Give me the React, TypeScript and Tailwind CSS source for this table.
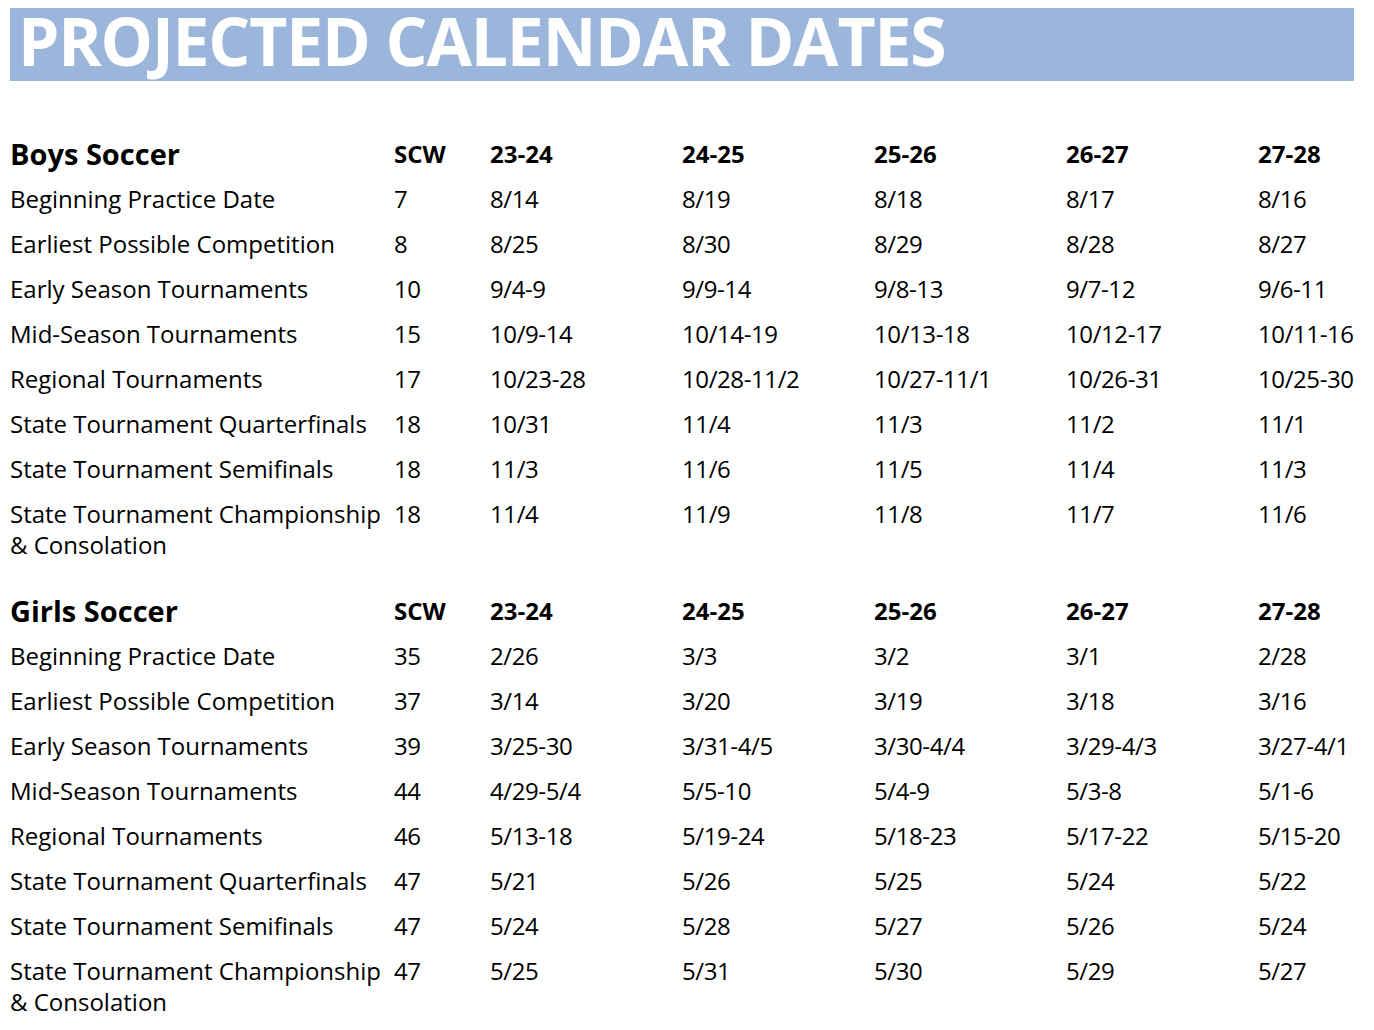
import React from "react";

type Row = { label: React.ReactNode; scw: string; vals: string[] };

const boys: Row[] = [
  { label: "Beginning Practice Date", scw: "7", vals: ["8/14", "8/19", "8/18", "8/17", "8/16"] },
  { label: "Earliest Possible Competition", scw: "8", vals: ["8/25", "8/30", "8/29", "8/28", "8/27"] },
  { label: "Early Season Tournaments", scw: "10", vals: ["9/4-9", "9/9-14", "9/8-13", "9/7-12", "9/6-11"] },
  { label: "Mid-Season Tournaments", scw: "15", vals: ["10/9-14", "10/14-19", "10/13-18", "10/12-17", "10/11-16"] },
  { label: "Regional Tournaments", scw: "17", vals: ["10/23-28", "10/28-11/2", "10/27-11/1", "10/26-31", "10/25-30"] },
  { label: "State Tournament Quarterfinals", scw: "18", vals: ["10/31", "11/4", "11/3", "11/2", "11/1"] },
  { label: "State Tournament Semifinals", scw: "18", vals: ["11/3", "11/6", "11/5", "11/4", "11/3"] },
  {
    label: (
      <>
        State Tournament Championship
        <br />& Consolation
      </>
    ),
    scw: "18",
    vals: ["11/4", "11/9", "11/8", "11/7", "11/6"],
  },
];

const girls: Row[] = [
  { label: "Beginning Practice Date", scw: "35", vals: ["2/26", "3/3", "3/2", "3/1", "2/28"] },
  { label: "Earliest Possible Competition", scw: "37", vals: ["3/14", "3/20", "3/19", "3/18", "3/16"] },
  { label: "Early Season Tournaments", scw: "39", vals: ["3/25-30", "3/31-4/5", "3/30-4/4", "3/29-4/3", "3/27-4/1"] },
  { label: "Mid-Season Tournaments", scw: "44", vals: ["4/29-5/4", "5/5-10", "5/4-9", "5/3-8", "5/1-6"] },
  { label: "Regional Tournaments", scw: "46", vals: ["5/13-18", "5/19-24", "5/18-23", "5/17-22", "5/15-20"] },
  { label: "State Tournament Quarterfinals", scw: "47", vals: ["5/21", "5/26", "5/25", "5/24", "5/22"] },
  { label: "State Tournament Semifinals", scw: "47", vals: ["5/24", "5/28", "5/27", "5/26", "5/24"] },
  {
    label: (
      <>
        State Tournament Championship
        <br />& Consolation
      </>
    ),
    scw: "47",
    vals: ["5/25", "5/31", "5/30", "5/29", "5/27"],
  },
];

const years = ["23-24", "24-25", "25-26", "26-27", "27-28"];

function Section({ title, rows }: { title: string; rows: Row[] }) {
  return (
    <div className="flex flex-col gap-[14px]">
      <div className="grid grid-cols-[384px_96px_192px_192px_192px_192px_96px] items-center h-[31px]">
        <div className="text-[29px] font-bold leading-[31px] text-black whitespace-nowrap">{title}</div>
        <div className="text-[24px] font-bold leading-[31px] text-black">SCW</div>
        {years.map((y) => (
          <div key={y} className="text-[24px] font-bold leading-[31px] text-black">
            {y}
          </div>
        ))}
      </div>
      {rows.map((r, i) => (
        <div
          key={i}
          className="grid grid-cols-[384px_96px_192px_192px_192px_192px_96px] items-start text-[24px] leading-[31px] text-black"
        >
          <div className="whitespace-nowrap">{r.label}</div>
          <div className="tracking-[-0.4px]">{r.scw}</div>
          {r.vals.map((v, j) => (
            <div key={j} className="whitespace-nowrap tracking-[-0.4px]">
              {v}
            </div>
          ))}
        </div>
      ))}
    </div>
  );
}

export default function App() {
  return (
    <div
      className="w-[1374px] h-[1030px] bg-white overflow-hidden"
      style={{ fontFamily: '"Open Sans", sans-serif' }}
    >
      <div className="pt-[8px] px-[10px]">
        <div className="w-[1344px] h-[73px] bg-[#9bb5db] flex items-start pt-[2px] pl-[8px]">
          <div className="text-white font-bold text-[66px] leading-[60px] tracking-[-1.2px] whitespace-nowrap">
            PROJECTED CALENDAR DATES
          </div>
        </div>
      </div>
      <div className="pl-[10px] pt-[57px] flex flex-col gap-[35px]">
        <Section title="Boys Soccer" rows={boys} />
        <Section title="Girls Soccer" rows={girls} />
      </div>
    </div>
  );
}
